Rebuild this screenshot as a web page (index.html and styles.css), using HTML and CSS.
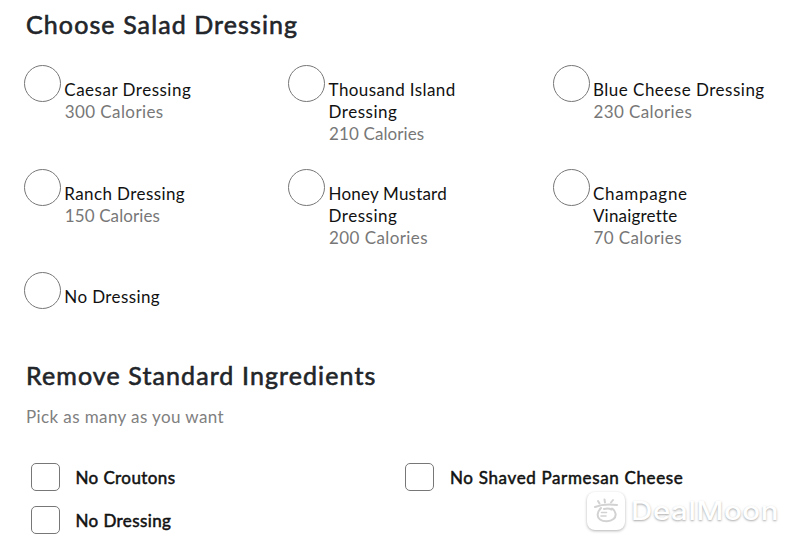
FILE: index.html
```html
<!DOCTYPE html>
<html lang="en">
<head>
  <meta charset="UTF-8">
  <meta name="viewport" content="width=device-width, initial-scale=1.0">
  <title>Choose Salad Dressing</title>
  <link rel="stylesheet" href="styles.css">
</head>
<body>
  <section class="dressing">
    <h2>Choose Salad Dressing</h2>
    <div class="radio-grid">
      <div class="radio-item">
        <span class="radio"></span>
        <div class="radio-text">
          <p class="name loose">Caesar Dressing</p>
          <p class="calories">300 Calories</p>
        </div>
      </div>
      <div class="radio-item">
        <span class="radio"></span>
        <div class="radio-text">
          <p class="name">Thousand Island</p>
          <p class="name loose">Dressing</p>
          <p class="calories tight">210 Calories</p>
        </div>
      </div>
      <div class="radio-item">
        <span class="radio"></span>
        <div class="radio-text">
          <p class="name loose">Blue Cheese Dressing</p>
          <p class="calories">230 Calories</p>
        </div>
      </div>
      <div class="radio-item">
        <span class="radio"></span>
        <div class="radio-text">
          <p class="name">Ranch Dressing</p>
          <p class="calories tight">150 Calories</p>
        </div>
      </div>
      <div class="radio-item">
        <span class="radio"></span>
        <div class="radio-text">
          <p class="name snug">Honey Mustard</p>
          <p class="name loose">Dressing</p>
          <p class="calories">200 Calories</p>
        </div>
      </div>
      <div class="radio-item">
        <span class="radio"></span>
        <div class="radio-text">
          <p class="name wide">Champagne</p>
          <p class="name snug">Vinaigrette</p>
          <p class="calories">70 Calories</p>
        </div>
      </div>
      <div class="radio-item">
        <span class="radio"></span>
        <div class="radio-text">
          <p class="name">No Dressing</p>
        </div>
      </div>
    </div>
  </section>

  <section class="remove">
    <h2>Remove Standard Ingredients</h2>
    <p class="hint">Pick as many as you want</p>
    <div class="check-grid">
      <div class="check-item">
        <span class="checkbox"></span>
        <span class="check-label">No Croutons</span>
      </div>
      <div class="check-item">
        <span class="checkbox"></span>
        <span class="check-label wide">No Shaved Parmesan Cheese</span>
      </div>
      <div class="check-item">
        <span class="checkbox"></span>
        <span class="check-label">No Dressing</span>
      </div>
    </div>
  </section>

  <div class="watermark">
    <div class="badge">
      <svg width="26" height="28" viewBox="0 0 26 28" fill="none" stroke="#d2d2d2" stroke-width="2" stroke-linecap="round">
        <path d="M2 10C8 7.500 16 7 24 8"/>
        <path d="M5 4l1.500 2.500M11.500 2.500l.5 3M20 3l-2 2.500"/>
        <path d="M8 11c-4 4-4.500 9-1 11.500s10 2.500 13.500-.5 2.500-8-1.500-10.500"/>
        <path d="M11 12c3-.8 5.500-.6 7.500.5"/>
        <path d="M8.500 15.500h5M8 19h5" stroke-width="1.600"/>
      </svg>
    </div>
    <span class="brand">DealMoon</span>
  </div>
</body>
</html>
```

FILE: styles.css
```css
* {
  margin: 0;
  padding: 0;
  box-sizing: border-box;
}

body {
  background: #fff;
  color: #111;
  width: 800px;
  height: 544px;
  padding: 8px 0 0 24px;
  overflow: hidden;
  font-family: Lato, 'Liberation Sans', sans-serif;
  font-size: 17px;
  line-height: 22px;
}

h2 {
  padding: 0 0 2px 2px;
  color: #222529;
  font-size: 25px;
  font-weight: 400;
  line-height: 32px;
  letter-spacing: 1.1px;
  -webkit-text-stroke: 0.6px #222529;
}

.radio-grid {
  display: grid;
  grid-template-columns: repeat(3, 264.3px);
  grid-template-rows: repeat(3, 103.5px);
  padding-top: 23px;
}

.radio-item {
  display: flex;
  align-items: flex-start;
  gap: 3.300px;
}

.radio {
  width: 37px;
  height: 37px;
  flex-shrink: 0;
  border: 1px solid #777;
  border-radius: 50%;
}

.radio-text {
  padding-top: 14px;
  white-space: nowrap;
}

.name,
.calories,
.hint,
.check-label {
  letter-spacing: 0.4px;
}

.calories {
  padding-left: 0.5px;
  color: #777;
}

.name.loose {
  letter-spacing: 0.5px;
}

.name.wide {
  letter-spacing: 0.7px;
}

.name.snug {
  letter-spacing: 0.2px;
}

.calories.tight {
  letter-spacing: 0.1px;
}

.remove {
  margin-top: -16.5px;
}

.hint {
  padding: 13px 0 0 2px;
  color: #808080;
}

.check-grid {
  display: grid;
  grid-template-columns: 374.5px 374px;
  grid-auto-rows: 42.5px;
  padding: 35px 0 0 6.500px;
}

.check-item {
  display: flex;
  align-items: flex-start;
  gap: 16px;
}

.checkbox {
  width: 29px;
  height: 28px;
  border: 1px solid #777;
  border-radius: 5px;
}

.check-label {
  padding-top: 4px;
  -webkit-text-stroke: 0.5px #111;
}

.check-label.wide {
  letter-spacing: 0.65px;
}

/* overlay in the corner, drawn above the page */
.watermark {
  position: absolute;
  left: 587px;
  top: 492px;
  display: flex;
  align-items: center;
  gap: 6px;
}

.badge {
  width: 38px;
  height: 38px;
  display: flex;
  justify-content: center;
  align-items: center;
  background: #fff;
  border-radius: 8px;
  box-shadow: 0 1px 3px rgba(0, 0, 0, 0.3);
}

.brand {
  color: #fff;
  font-family: Inter, sans-serif;
  font-size: 25px;
  font-weight: 500;
  letter-spacing: 0.5px;
  line-height: 38px;
  text-shadow: 0 1px 2px rgba(0, 0, 0, 0.35);
  transform: scaleX(1.18);
  transform-origin: left center;
}
```
